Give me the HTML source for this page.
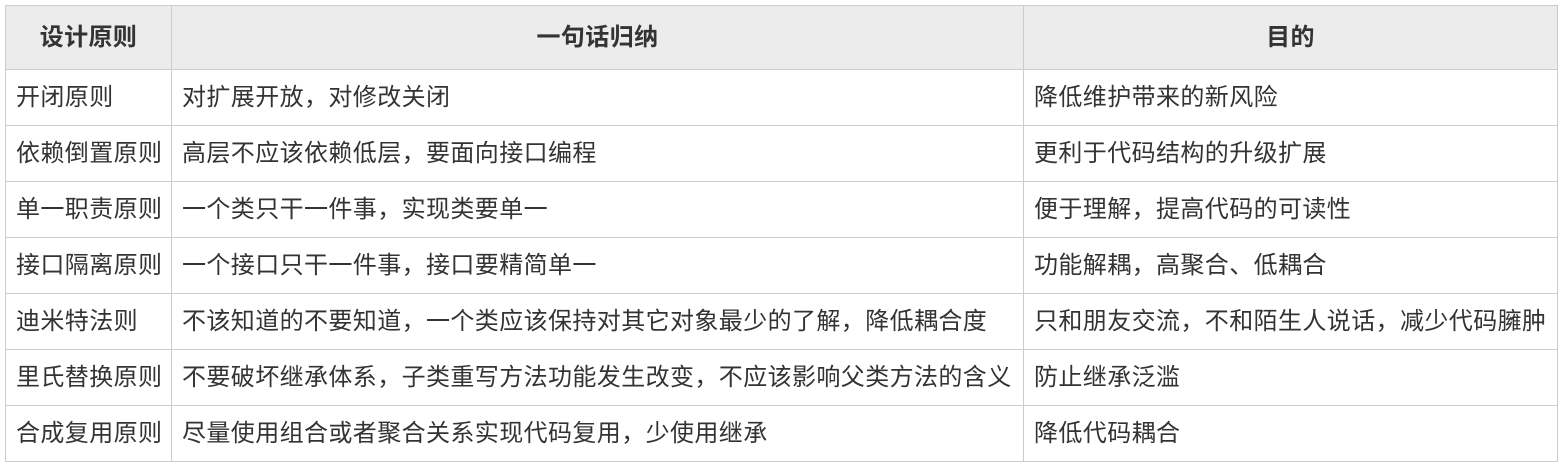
<!DOCTYPE html>
<html><head><meta charset="utf-8"><style>
html,body{margin:0;padding:0;background:#fff;width:1565px;height:473px;overflow:hidden}
table{position:absolute;left:5px;top:5px;border-collapse:collapse;table-layout:fixed;width:1552px;
font-family:"Liberation Sans","Noto Sans CJK SC",sans-serif;font-size:24px;color:#333;letter-spacing:0.4px}
td,th{border:1px solid #ccc;padding:0 0 0 10px;height:55px;white-space:nowrap;overflow:hidden;line-height:1}
th{background:#ececec;height:63px;text-align:center;padding:0;font-weight:bold}
</style></head><body>
<table>
<colgroup><col style="width:166px"><col style="width:852px"><col style="width:534px"></colgroup>
<tr><th>设计原则</th><th>一句话归纳</th><th>目的</th></tr>
<tr><td>开闭原则</td><td>对扩展开放，对修改关闭</td><td>降低维护带来的新风险</td></tr>
<tr><td>依赖倒置原则</td><td>高层不应该依赖低层，要面向接口编程</td><td>更利于代码结构的升级扩展</td></tr>
<tr><td>单一职责原则</td><td>一个类只干一件事，实现类要单一</td><td>便于理解，提高代码的可读性</td></tr>
<tr><td>接口隔离原则</td><td>一个接口只干一件事，接口要精简单一</td><td>功能解耦，高聚合、低耦合</td></tr>
<tr><td>迪米特法则</td><td>不该知道的不要知道，一个类应该保持对其它对象最少的了解，降低耦合度</td><td>只和朋友交流，不和陌生人说话，减少代码臃肿</td></tr>
<tr><td>里氏替换原则</td><td>不要破坏继承体系，子类重写方法功能发生改变，不应该影响父类方法的含义</td><td>防止继承泛滥</td></tr>
<tr><td>合成复用原则</td><td>尽量使用组合或者聚合关系实现代码复用，少使用继承</td><td>降低代码耦合</td></tr>
</table>
</body></html>
